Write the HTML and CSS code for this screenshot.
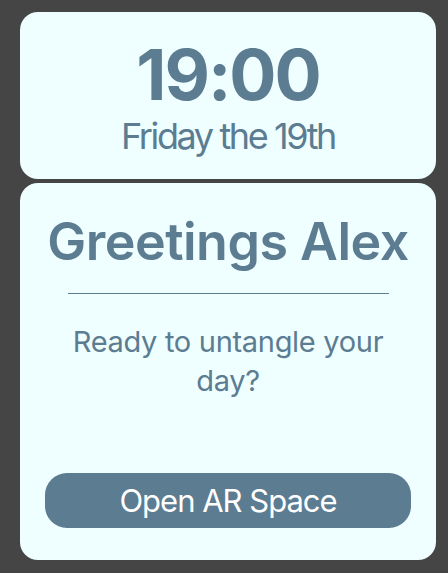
FILE: index.html
```html
<!DOCTYPE html>
<html lang="en">

<head>
    <meta charset="UTF-8">
    <meta name="viewport" content="width=device-width, initial-scale=1.0">
    <title>Untangle</title>
    <link rel="stylesheet" href="styles.css">
</head>

<body>
    <div class="screen">
        <div class="card clock">
            <div class="time">19:00</div>
            <div class="date">Friday the 19th</div>
        </div>
        <div class="card welcome">
            <h1 class="greeting">Greetings Alex</h1>
            <hr class="divider">
            <p class="prompt">Ready to untangle your day?</p>
            <button class="open-button">Open AR Space</button>
        </div>
    </div>
</body>

</html>
```

FILE: styles.css
```css
* {
    box-sizing: border-box;
}

:root {
    --bg: #454545;
    --card: #effefe;
    --ink: #5b7c91;
    font-family: Inter, "Noto Sans", sans-serif;
}

body {
    margin: 0;
    background-color: var(--bg);
    color: var(--ink);
}

.screen {
    display: flex;
    flex-direction: column;
    gap: 4px;
    height: 573px;
    padding: 12px 12px 13px 20px;
}

.card {
    background-color: var(--card);
    border-radius: 18px;
    text-align: center;
}

.clock {
    height: 167px;
    padding-top: 28px;
}

.time {
    font-size: 70px;
    font-weight: 700;
    line-height: 70px;
    letter-spacing: -2px;
}

.date {
    margin-top: 6px;
    font-size: 36px;
    line-height: 40px;
    letter-spacing: -2.4px;
}

.welcome {
    flex: 1;
    display: flex;
    flex-direction: column;
    align-items: center;
    padding: 31px 20px 32px;
}

.greeting {
    margin: 0;
    font-size: 52px;
    font-weight: 600;
    line-height: 56px;
    letter-spacing: -0.5px;
}

.divider {
    width: 321px;
    margin: 23px 0 0;
    border: none;
    border-top: 1.5px solid var(--ink);
}

.prompt {
    margin: 28px 0 0;
    width: 330px;
    font-size: 29px;
    line-height: 39px;
    letter-spacing: -0.3px;
}

.open-button {
    margin-top: auto;
    width: 366px;
    height: 55px;
    border: none;
    border-radius: 22px;
    background-color: var(--ink);
    color: white;
    font-family: inherit;
    font-size: 31px;
    letter-spacing: -1px;
}
```
